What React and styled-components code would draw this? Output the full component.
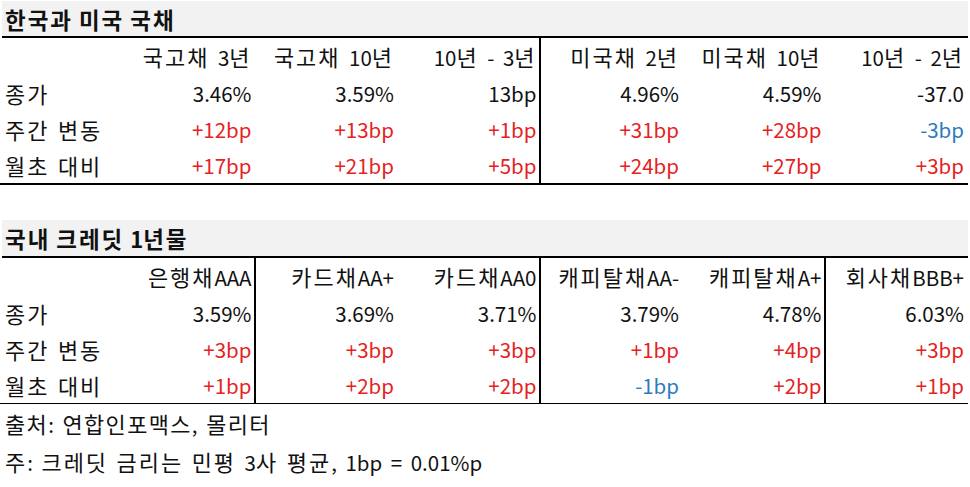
import React from "react";
import styled, { createGlobalStyle } from "styled-components";

const COLORS = {
  text: "#111111",
  red: "#e52222",
  blue: "#2b7bbf",
  titleBg: "#f2f2f2",
  line: "#000000",
};

const GlobalStyle = createGlobalStyle`
  html, body {
    margin: 0;
    padding: 0;
    background: #ffffff;
  }
  body {
    font-family: "Noto Sans CJK KR", "Noto Sans", sans-serif;
    color: ${COLORS.text};
  }
`;

const Page = styled.div`
  width: 968px;
  padding-top: ${(p) => p.top}px;
`;

const Section = styled.section`
  margin-bottom: ${(p) => p.gap || 0}px;
`;

// hangul runs are drawn a little wider, like the original sheet font
const Hangul = styled.span`
  font-size: ${(p) => p.scale || 1.07}em;
  letter-spacing: ${(p) => p.track ?? 2}px;
`;

const ko = (text, scale, track) => (
  <span>
    {String(text)
      .split(/([가-힣]+)/)
      .map((part, i) =>
        /[가-힣]/.test(part) ? (
          <Hangul key={i} scale={scale} track={track}>
            {part}
          </Hangul>
        ) : (
          part
        )
      )}
  </span>
);

const TitleBar = styled.div`
  height: ${(p) => p.h}px;
  margin-left: 2px;
  padding-left: 3px;
  display: flex;
  align-items: center;
  background: ${COLORS.titleBg};
  font-size: 22px;
  font-weight: 700;
  word-spacing: 1px;
  border-bottom: 2.5px solid ${COLORS.line};
`;

const Table = styled.div`
  display: grid;
  grid-template-columns: 113px repeat(6, 142.5px);
  border-bottom: ${(p) => p.bottom}px solid ${COLORS.line};
`;

const Cell = styled.div`
  height: ${(p) => p.h}px;
  display: flex;
  align-items: center;
  justify-content: ${(p) => (p.label ? "flex-start" : "flex-end")};
  padding-left: ${(p) => (p.label ? 5 : 0)}px;
  padding-right: ${(p) => (p.label ? 0 : p.divider ? 2 : 4)}px;
  box-sizing: border-box;
  font-size: 20.5px;
  white-space: nowrap;
  word-spacing: 4px;
  color: ${(p) =>
    p.tone === "up" ? COLORS.red : p.tone === "down" ? COLORS.blue : COLORS.text};
  border-right: ${(p) => (p.divider ? `2px solid ${COLORS.line}` : "none")};
`;

const Notes = styled.div`
  padding-left: 5px;
  font-size: 20.5px;
  word-spacing: 4px;
`;

const NoteLine = styled.div`
  height: 38px;
  display: flex;
  align-items: center;
  white-space: nowrap;
`;

const tone = (v) =>
  v.startsWith("+") ? "up" : v.startsWith("-") && v.endsWith("bp") ? "down" : null;

const bonds = {
  title: "한국과 미국 국채",
  dividers: [3],
  head: ["국고채 3년", "국고채 10년", "10년 - 3년", "미국채 2년", "미국채 10년", "10년 - 2년"],
  rows: [
    ["종가", "3.46%", "3.59%", "13bp", "4.96%", "4.59%", "-37.0"],
    ["주간 변동", "+12bp", "+13bp", "+1bp", "+31bp", "+28bp", "-3bp"],
    ["월초 대비", "+17bp", "+21bp", "+5bp", "+24bp", "+27bp", "+3bp"],
  ],
};

const credit = {
  title: "국내 크레딧 1년물",
  dividers: [1, 3, 5],
  head: ["은행채AAA", "카드채AA+", "카드채AA0", "캐피탈채AA-", "캐피탈채A+", "회사채BBB+"],
  rows: [
    ["종가", "3.59%", "3.69%", "3.71%", "3.79%", "4.78%", "6.03%"],
    ["주간 변동", "+3bp", "+3bp", "+3bp", "+1bp", "+4bp", "+3bp"],
    ["월초 대비", "+1bp", "+2bp", "+2bp", "-1bp", "+2bp", "+1bp"],
  ],
};

const DataTable = ({ data, titleH, bottom }) => (
  <>
    <TitleBar h={titleH}>{ko(data.title, 1.02, 2)}</TitleBar>
    <Table bottom={bottom}>
      <Cell label h={37} />
      {data.head.map((h, i) => (
        <Cell key={h} h={37} divider={data.dividers.includes(i + 1)}>
          {ko(h)}
        </Cell>
      ))}
      {data.rows.map((row) =>
        row.map((v, i) =>
          i === 0 ? (
            <Cell key={row[0] + i} label h={36}>
              {ko(v)}
            </Cell>
          ) : (
            <Cell
              key={row[0] + i}
              h={36}
              tone={tone(v)}
              divider={data.dividers.includes(i)}
            >
              {v}
            </Cell>
          )
        )
      )}
    </Table>
  </>
);

export default function App() {
  return (
    <>
      <GlobalStyle />
      <Page top={1}>
        <Section gap={35}>
          <DataTable data={bonds} titleH={35} bottom={2} />
        </Section>
        <Section>
          <DataTable data={credit} titleH={36} bottom={1.5} />
        </Section>
        <Notes>
          <NoteLine>{ko("출처: 연합인포맥스, 몰리터", 1.07, 1.4)}</NoteLine>
          <NoteLine>{ko("주: 크레딧 금리는 민평 3사 평균, 1bp = 0.01%p")}</NoteLine>
        </Notes>
      </Page>
    </>
  );
}
